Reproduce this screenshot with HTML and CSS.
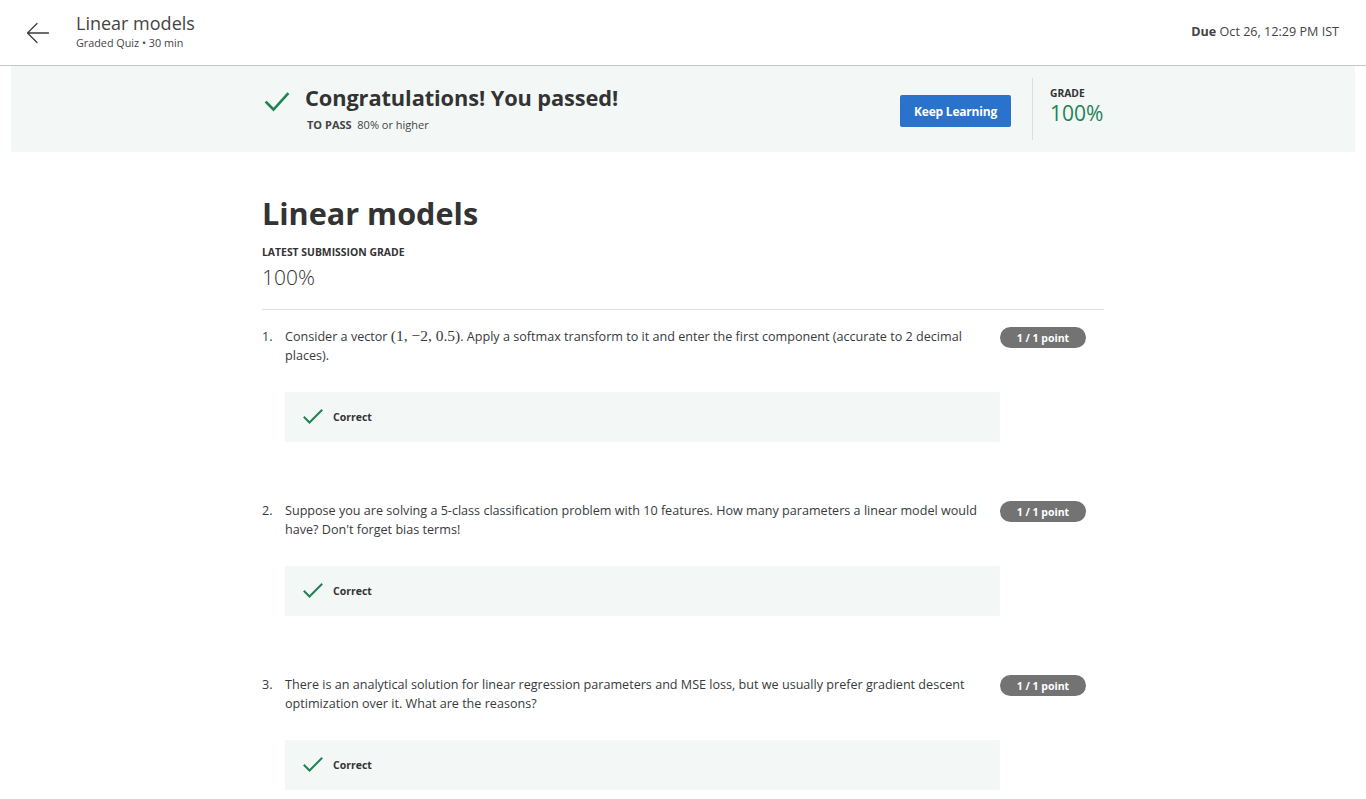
FILE: index.html
```html
<!DOCTYPE html>
<html lang="en">
<head>
<meta charset="utf-8">
<title>Linear models</title>
<link rel="stylesheet" href="styles.css">
</head>
<body>
<header class="topbar">
  <div class="topbar-left">
    <button class="back" aria-label="Back">
      <svg width="24" height="24" viewBox="0 0 24 24" fill="none" stroke="#3c3c3c" stroke-width="1.3" stroke-linecap="round" stroke-linejoin="round">
        <path d="M22.5 12H1.5M11 2.5L1.5 12L11 21.5"/>
      </svg>
    </button>
    <div class="titles">
      <div class="title">Linear models</div>
      <div class="subtitle">Graded Quiz • 30 min</div>
    </div>
  </div>
  <div class="due"><b>Due</b> Oct 26, 12:29 PM IST</div>
</header>

<section class="banner">
  <div class="banner-inner">
    <div class="banner-left">
      <svg class="bigcheck" width="26" height="22" viewBox="0 0 26 22" fill="none" stroke="#1f8354" stroke-width="2.6" stroke-linecap="square">
        <path d="M2.5 11.5L9.5 18.5L23.5 3"/>
      </svg>
      <div>
        <h2 class="congrats">Congratulations! You passed!</h2>
        <div class="topass"><b>TO PASS</b>&nbsp; 80% or higher</div>
      </div>
    </div>
    <div class="banner-right">
      <button class="keep">Keep Learning</button>
      <div class="vdivider"></div>
      <div class="grade">
        <div class="grade-label">GRADE</div>
        <div class="grade-value">100%</div>
      </div>
    </div>
  </div>
</section>

<main class="content">
  <h1 class="quiz-title">Linear models</h1>
  <div class="latest-label">LATEST SUBMISSION GRADE</div>
  <div class="latest-value">100%</div>
  <hr class="rule">

  <div class="question">
    <div class="q-row">
      <span class="q-num">1.</span>
      <p class="q-text">Consider a vector <span class="math">(1, −2, 0.5)</span>. Apply a softmax transform to it and enter the first component (accurate to 2 decimal places).</p>
      <span class="badge">1 / 1 point</span>
    </div>
    <div class="correct">
      <svg width="20" height="16" viewBox="0 0 20 16" fill="none" stroke="#1f8354" stroke-width="2" stroke-linecap="square"><path d="M1.5 8.5L6.5 13.5L18.5 1.5"/></svg>
      <span>Correct</span>
    </div>
  </div>

  <div class="question">
    <div class="q-row">
      <span class="q-num">2.</span>
      <p class="q-text">Suppose you are solving a 5-class classification problem with 10 features. How many parameters a linear model would have? Don't forget bias terms!</p>
      <span class="badge">1 / 1 point</span>
    </div>
    <div class="correct">
      <svg width="20" height="16" viewBox="0 0 20 16" fill="none" stroke="#1f8354" stroke-width="2" stroke-linecap="square"><path d="M1.5 8.5L6.5 13.5L18.5 1.5"/></svg>
      <span>Correct</span>
    </div>
  </div>

  <div class="question">
    <div class="q-row">
      <span class="q-num">3.</span>
      <p class="q-text">There is an analytical solution for linear regression parameters and MSE loss, but we usually prefer gradient descent optimization over it. What are the reasons?</p>
      <span class="badge">1 / 1 point</span>
    </div>
    <div class="correct">
      <svg width="20" height="16" viewBox="0 0 20 16" fill="none" stroke="#1f8354" stroke-width="2" stroke-linecap="square"><path d="M1.5 8.5L6.5 13.5L18.5 1.5"/></svg>
      <span>Correct</span>
    </div>
  </div>
</main>
</body>
</html>
```
FILE: styles.css
```css
* { box-sizing: border-box; }
html, body { margin: 0; padding: 0; background: #fff; }
body {
  font-family: "Open Sans", "Noto Sans", Arial, sans-serif;
  color: #373a3c;
  overflow: hidden;
  height: 799px;
}

.topbar {
  height: 66px;
  border-bottom: 1px solid #c6c6c6;
  display: flex;
  align-items: center;
  justify-content: space-between;
  padding: 0 27px 0 26px;
}
.topbar-left { display: flex; align-items: center; }
.back {
  background: none; border: 0; padding: 0; margin: 0 26px 0 0;
  width: 24px; height: 24px; display: flex; cursor: pointer;
}
.titles { margin-top: -2px; }
.title { font-size: 18px; color: #444; line-height: 22px; }
.subtitle { font-size: 10.8px; color: #444; line-height: 16px; margin-top: 1px; }
.due { font-size: 12.6px; color: #444; margin-top: -2px; }
.due b { font-weight: 700; }

.banner {
  margin: 0 11px;
  height: 86px;
  background: #f3f8f6;
  display: flex;
  align-items: center;
  justify-content: center;
}
.banner-inner {
  width: 842px;
  display: flex;
  align-items: center;
  justify-content: space-between;
}
.banner-left { display: flex; align-items: flex-start; }
.bigcheck { margin: 5px 15px 0 2px; }
.congrats {
  margin: -3px 0 0;
  font-size: 21.8px;
  font-weight: 700;
  color: #333;
  line-height: 30px;
  letter-spacing: -0.1px;
}
.topass { font-size: 11px; color: #444; margin: 5px 0 0 2px; line-height: 14px; }
.topass b { font-weight: 700; }

.banner-right { display: flex; align-items: center; height: 62px; }
.keep {
  width: 111px; height: 32px;
  margin-top: 4px;
  background: #2a73cc; color: #fff;
  border: 0; border-radius: 2px;
  font-family: inherit; font-size: 12px; font-weight: 700;
  letter-spacing: -0.2px;
  cursor: pointer;
}
.vdivider { width: 1px; height: 62px; background: #dcdedd; margin: 0 17px 0 21px; }
.grade { width: 54px; align-self: flex-start; padding-top: 8px; }
.grade-label { font-size: 10.3px; font-weight: 700; color: #333; line-height: 14px; }
.grade-value { font-size: 21px; color: #1f8354; line-height: 24px; font-weight: 400; margin-top: 1px; }

.content { width: 842px; margin: 0 auto; padding-top: 41px; }
.quiz-title {
  margin: 0;
  font-size: 30.6px;
  font-weight: 700;
  color: #333;
  line-height: 40px;
}
.latest-label { font-size: 10.4px; font-weight: 700; color: #333; margin-top: 12px; line-height: 14px; }
.latest-value { font-size: 21px; color: #333; line-height: 28px; margin-top: 4px; font-weight: 300; }
.rule { border: 0; border-top: 1px solid #e0e0e0; margin: 18px 0 17px; }

.question { margin-bottom: 59px; }
.q-row { display: flex; align-items: flex-start; }
.q-num { width: 23px; font-size: 12.6px; line-height: 19px; flex: none; }
.q-text {
  margin: 0;
  width: 700px;
  font-size: 12.6px;
  line-height: 19px;
  color: #373a3c;
  flex: none;
}
.math { font-family: "Liberation Serif", "DejaVu Serif", serif; font-size: 15.5px; line-height: 0; }
.badge {
  margin-left: 15px;
  width: 86px; height: 21px;
  border-radius: 11px;
  background: #737373;
  color: #fff;
  font-size: 10.5px;
  font-weight: 700;
  display: flex; align-items: center; justify-content: center;
}
.correct {
  margin: 27px 0 0 23px;
  width: 715px;
  height: 50px;
  background: #f3f8f6;
  display: flex;
  align-items: center;
  padding-left: 18px;
  gap: 10px;
}
.correct span { font-size: 10.5px; font-weight: 700; color: #333; }
```
